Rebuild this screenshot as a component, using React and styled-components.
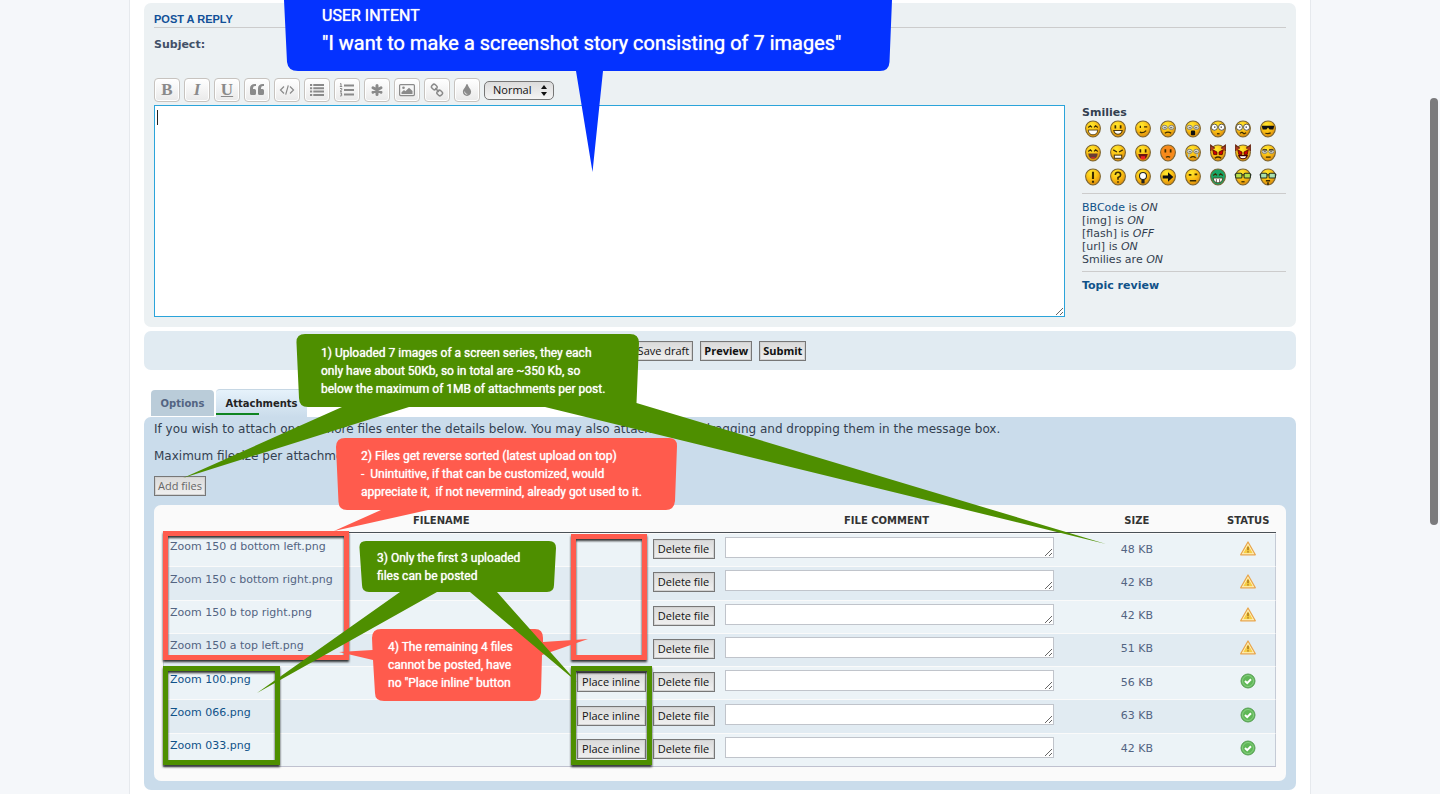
import React from "react";
import styled, { createGlobalStyle, css } from "styled-components";
import { FaTint } from "react-icons/fa";

const verdana = `Verdana, "DejaVu Sans", sans-serif`;
const lucida = `"Lucida Grande", "Open Sans", sans-serif`;
const GREEN = "#4e8f00";
const RED = "#ff5b4d";
const BLUE = "#0432ff";

const GlobalStyle = createGlobalStyle`
  * { box-sizing: border-box; }
  body {
    margin: 0;
    background: #f5f7fa;
    color: #333f50;
    font: 11px/13px ${verdana};
  }
  a { color: #105289; text-decoration: none; }
`;

const Page = styled.div`
  position: relative;
  min-height: 100vh;
  padding: 0 129px;
  overflow: hidden;
`;
const Wrap = styled.main`
  min-height: 100vh;
  padding: 3px 14px 4px;
  background: #fff;
  border: solid #e6e9ed;
  border-width: 0 1px;
`;
const Panel = styled.section`
  padding: 10px;
  border-radius: 7px;
  background: #ecf1f3;
`;
const PanelTitle = styled.h3`
  margin: 0 0 10px;
  padding-bottom: 2px;
  border-bottom: 1px solid #cccccc;
  color: #115098;
  font: bold 11px/12px Arial, "Liberation Sans", sans-serif;
  text-transform: uppercase;
`;
const SubjectRow = styled.div`
  display: flex;
  align-items: flex-start;
  height: 40px;
  color: #425067;
  font-weight: bold;
`;
const SubjectLabel = styled.label`
  width: 22%;
`;
const SubjectInput = styled.input`
  width: 40%;
  height: 20px;
  border: 1px solid #b4bac0;
  border-radius: 4px;
`;
const Toolbar = styled.div`
  display: flex;
  align-items: center;
  gap: 4px;
  margin-bottom: 3px;
`;
const ToolButton = styled.button`
  display: grid;
  place-items: center;
  width: 26px;
  height: 24px;
  padding: 0;
  border: 1px solid #c7c3bf;
  border-radius: 4px;
  background: linear-gradient(#fff, #e9e9e9);
  box-shadow: inset 0 0 0 1px #fff;
  color: #8a8a8a;
  font: bold 17px/20px "Liberation Serif", serif;
  font-style: ${(p) => (p.$italic ? "italic" : "normal")};
  text-decoration: ${(p) => (p.$underline ? "underline" : "none")};
`;
const SizeBox = styled.div`
  position: relative;
  display: flex;
`;
const SizeSelect = styled.select`
  appearance: none;
  width: 70px;
  height: 19px;
  padding: 0 8px;
  border: 1px solid #767676;
  border-radius: 5px;
  background: linear-gradient(#dcdcdc, #f4f4f4);
  color: #111;
  font: 11px/16px ${lucida};
`;
const SizeArrows = styled.svg`
  position: absolute;
  right: 7px;
  top: 4px;
  pointer-events: none;
`;
const EditorRow = styled.div`
  display: flex;
  gap: 17px;
`;
const MessageBox = styled.div`
  position: relative;
  display: flex;
  flex: 1;
`;
const Message = styled.textarea`
  flex: 1;
  height: 212px;
  padding: 3px;
  border: 1px solid #2ba4da;
  background: #fff;
  font: 12px/16px ${verdana};
  outline: none;
`;
const Caret = styled.span`
  position: absolute;
  left: 3px;
  top: 5px;
  width: 1px;
  height: 15px;
  background: #222;
`;
const SideBox = styled.aside`
  width: 204px;
  padding-top: 1px;
`;
const SideTitle = styled.strong`
  display: block;
`;
const Smilies = styled.div`
  display: grid;
  grid-template-columns: repeat(8, 21px);
  grid-auto-rows: 20px;
  gap: 4px;
  align-items: center;
  justify-items: center;
  margin-bottom: 6px;
`;
const SmileyLink = styled.a`
  display: block;
  height: 18px;
`;
const Rule = styled.hr`
  margin: 5px 0 7px;
  border: 0;
  border-top: 1px solid #ccc;
`;
const ActionBar = styled.section`
  display: flex;
  justify-content: center;
  align-items: center;
  gap: 7px;
  height: 39px;
  margin: 4px 0 19px;
  border-radius: 7px;
  background: #e1ebf2;
`;
const PushButton = styled.button`
  height: 20px;
  padding: 0 3px;
  border: 1px solid #777;
  background: linear-gradient(#dadada, #f0f0f0);
  box-shadow: inset 0 0 0 1px #d2d2d2;
  color: #111;
  font: 11px/16px ${lucida};
  white-space: nowrap;
  ${(p) => p.$strong && css`font-weight: bold;`}
  ${(p) => p.$muted && css`color: #666;`}
  ${(p) => p.$wide && css`width: ${p.$wide}px;`}
`;
const Tabs = styled.nav`
  display: flex;
  align-items: flex-end;
  gap: 2px;
  padding-left: 7px;
`;
const Tab = styled.a`
  position: relative;
  height: 26px;
  width: 63px;
  margin-bottom: 1px;
  border-radius: 4px 4px 0 0;
  background: #baccd9;
  color: #536482;
  font-size: 10px;
  font-weight: bold;
  line-height: 27px;
  text-align: center;
  ${(p) =>
    p.$active &&
    css`
      height: 28px;
      width: 91px;
      margin-bottom: 0;
      border-top: 1px solid #c6d7e4;
      background: linear-gradient(#e6f2fb, #cadceb);
      color: #222;
      &::after {
        content: "";
        position: absolute;
        left: 0;
        bottom: 2px;
        width: 43px;
        height: 2px;
        background: #0f8420;
      }
    `}
`;
const AttachPanel = styled(Panel)`
  background: #cadceb;
  padding: 5px 10px 9px;
`;
const Intro = styled.p`
  margin: 0 0 12px;
  font-size: 12px;
  line-height: 15px;
`;
const FileBox = styled.div`
  margin-top: 9px;
  padding: 7px 10px 14px 9px;
  border-radius: 7px;
  background: #fafafa;
`;
const FileTable = styled.table`
  width: 100%;
  height: 255px;
  table-layout: fixed;
  border-collapse: separate;
  border-spacing: 0;
  border-bottom: 1px solid #bfc1cf;
`;
const Head = styled.th`
  width: ${(p) => p.$w};
  height: 21px;
  padding: 0 0 3px;
  border-bottom: 1px solid #4a5056;
  color: #333;
  font-size: 10px;
  font-weight: bold;
  text-transform: uppercase;
`;
const Row = styled.tr`
  background: #ecf3f7;
  &:nth-child(even) { background: #e1ebf2; }
`;
const Cell = styled.td`
  padding: 0 0 2px;
  border-top: 1px solid #fafafa;
  color: #536482;
  text-align: center;
  &:last-child { border-right: 1px solid #c5cbd6; }
  &:first-child { border-left: 1px solid #c5cbd6; }
`;
const FileLine = styled.div`
  display: flex;
  align-items: center;
  gap: 7px;
  padding: 0 5px 0 6px;
`;
const FileName = styled.span`
  flex: 1;
  height: 19px;
  text-align: left;
  color: #536482;
`;
const Comment = styled.textarea`
  display: block;
  width: calc(100% - 4px);
  height: 21px;
  margin: 0 0 3px 5px;
  border: 1px solid #c0c4cb;
  background: #fff;
  font: 11px/13px ${verdana};
  resize: both;
`;
const StatusIcon = styled.svg`
  display: block;
  margin: 0 auto 2px;
`;
const ScrollThumb = styled.div`
  position: absolute;
  right: 2px;
  top: 98px;
  width: 8px;
  height: 427px;
  border-radius: 4px;
  background: #7b7b7d;
`;

/* Annotations lie over the page on a free canvas. */
const Canvas = styled.div`
  position: absolute;
  inset: 0;
  pointer-events: none;
`;
const Shapes = styled.svg`
  position: absolute;
  left: 0;
  top: 0;
  filter: ${(p) => (p.$shadow ? "drop-shadow(0 2px 1px rgba(0,0,0,.8))" : "none")};
`;
const Note = styled.p`
  position: absolute;
  left: ${(p) => p.$x}px;
  top: ${(p) => p.$y}px;
  margin: 0;
  color: #fff;
  font: 400 12px/18px Roboto, sans-serif;
  text-shadow: 0 0 1px #fff;
  white-space: pre;
`;
const IntentNote = styled(Note)`
  font-size: 16px;
  line-height: 20px;
`;
const IntentTitle = styled.strong`
  display: block;
  margin-top: 5px;
  font-size: 20px;
  line-height: 24px;
  font-weight: 400;
`;

const glyph = { width: 16, height: 14, viewBox: "0 0 16 14", fill: "none", stroke: "currentColor" };
const QuoteGlyph = () => (
  <svg {...glyph} fill="currentColor" stroke="none">
    <path d="M7 1v2H6Q4 3 4 5.300v.7h1.500Q7 6 7 7.500v3Q7 12 5.500 12h-3Q1 12 1 10.500V5.500Q1 1 6 1z" />
    <path d="M15 1v2h-1q-2 0-2 2.300v.7h1.500Q15 6 15 7.500v3q0 1.500-1.500 1.500h-3Q9 12 9 10.500V5.500Q9 1 14 1z" />
  </svg>
);
const CodeGlyph = () => (
  <svg {...glyph} strokeWidth="1.200"><path d="M5 3.500L1.500 7L5 10.500M11 3.500L14.500 7L11 10.500M9.300 2.300L6.700 11.700" /></svg>
);
const BulletGlyph = () => (
  <svg {...glyph} strokeWidth="2"><path d="M1 2h2.200M1 5.300h2.200M1 8.600h2.200M1 12h2.200M4.300 2H15M4.300 5.300H15M4.300 8.600H15M4.300 12H15" /></svg>
);
const NumberGlyph = () => (
  <svg {...glyph} strokeWidth="2">
    <path d="M5 2.500H15M5 7H15M5 11.500H15" />
    <path strokeWidth="1" d="M1 1l1-.5v3M.8 3.500h2.400M1 5.500h1.800v1.300L1 8.300h2M1 10h1.900L2 11.300l1 .5q0 1.500-2 1.200" />
  </svg>
);
const AsteriskGlyph = () => (
  <svg {...glyph} strokeWidth="3" strokeLinecap="round"><path d="M8 2.500v9M4 4.800l8 4.400M12 4.800L4 9.200" /></svg>
);
const ImageGlyph = () => (
  <svg {...glyph}>
    <rect x=".6" y="1.600" width="14.800" height="11" rx="1" strokeWidth="1.200" />
    <circle cx="4.500" cy="4.800" r="1.300" fill="currentColor" stroke="none" />
    <path d="M2.500 11V9.300L5 7l1.400 1.300L10 4.700l3.500 3.400V11z" fill="currentColor" stroke="none" />
  </svg>
);
const LinkGlyph = () => (
  <svg {...glyph} strokeWidth="1.500">
    <rect x="2.600" y="1.600" width="5.400" height="4.800" rx="2" transform="rotate(42 5.300 4)" />
    <rect x="8" y="7.600" width="5.400" height="4.800" rx="2" transform="rotate(42 10.700 10)" />
    <path d="M6.300 5l3.500 4" />
  </svg>
);

const tools = [
  ["Bold", "B"],
  ["Italic", "I", { $italic: true }],
  ["Underline", "U", { $underline: true }],
  ["Quote", <QuoteGlyph />],
  ["Code", <CodeGlyph />],
  ["List", <BulletGlyph />],
  ["Ordered list", <NumberGlyph />],
  ["List item", <AsteriskGlyph />],
  ["Insert image", <ImageGlyph />],
  ["Insert URL", <LinkGlyph />],
  ["Font colour", <FaTint size={12} />],
];

const line = { stroke: "#3b2b00", strokeWidth: 1.2, fill: "none" };
const eyes = <path d="M5.500 4.500v3M10.500 4.500v3" {...line} strokeWidth="1.600" />;
const roundEyes = (
  <g fill="#fff" stroke="#444" strokeWidth=".8"><circle cx="4.600" cy="6.300" r="2.900" /><circle cx="11.400" cy="6.300" r="2.900" /><path d="M5 5.500v1.500M11 5.500v1.500" stroke="#000" /></g>
);
const paleEyes = (
  <g fill="#dcdccc" stroke="#777" strokeWidth=".8"><ellipse cx="4.800" cy="6.500" rx="2.500" ry="2" /><ellipse cx="11.200" cy="6.500" rx="2.500" ry="2" /><path d="M4 6.800h2M10 6.800h2" stroke="#444" /></g>
);
const closedEyes = <path d="M3.500 6.500L5.500 5l1.500 1.500M9 6.500L10.500 5l2 1.500" {...line} />;
const teeth = <path d="M3.500 9h9q-.5 4.500-4.500 4.500T3.500 9z" fill="#fff" stroke="#4b3a10" strokeWidth=".8" />;
const redEyes = <path d="M3 5L7 7v2.500H4zM13 5L9 7v2.500h3z" fill="#d00000" stroke="#400" strokeWidth=".7" />;
const horns = <path d="M1 6V.5l4 3M15 6V.5l-4 3" fill="#b03a20" stroke="#6d2d18" strokeWidth="1" />;
const specs = (c) => (
  <g><path d="M0 6h16" stroke="#222" /><rect x="1" y="4.500" width="6" height="4.500" rx="1" fill={c} stroke="#243020" /><rect x="9" y="4.500" width="6" height="4.500" rx="1" fill={c} stroke="#243020" /></g>
);

const smilies = [
  ["Very happy", <>{closedEyes}{teeth}</>],
  ["Smile", <>{eyes}<path d="M4 9.500h8q-1 3.500-4 3.500t-4-3.500z" fill="#fff" stroke="#4b3a10" /></>],
  ["Wink", <><path d="M5.500 5v2M9 6h3M5 11q3 1.500 6-1.500" {...line} /></>],
  ["Sad", <>{paleEyes}<path d="M5 12q3-2 6 0" {...line} /></>],
  ["Surprised", <>{paleEyes}<rect x="6" y="9.500" width="4" height="4.500" rx="1" fill="#111" /></>],
  ["Shocked", <>{roundEyes}<path d="M7 12.500h2.500" {...line} /></>],
  ["Confused", <>{roundEyes}<path d="M5 12l2-1 2 1.500 2-1" {...line} /></>],
  ["Cool", <><path d="M2 5h12l-1 3.500H9.500L8 6.500l-1.500 2H3z" fill="#111" /><path d="M5.500 12q3 1 5-.5" {...line} /></>],
  ["Laughing", <>{closedEyes}<path d="M3.500 8.500h9q-.5 5-4.500 5t-4.500-5z" fill="#693d35" /><path d="M6 12h4l-1 1H7z" fill="#e22" /></>],
  ["Mad", <><path d="M3.500 5L7 7M12.500 5L9 7" {...line} /><rect x="4.500" y="10" width="7" height="3" fill="#fff" stroke="#4b3a10" /></>],
  ["Razz", <>{eyes}<path d="M3.500 9h9q-1 5-4.500 5T3.500 9z" fill="#6d1710" /><path d="M6 11h4v3H6z" fill="#e22" /></>],
  ["Embarrassed", <>{eyes}<path d="M6 12q2-1 4 0" {...line} /></>, "#f78a1b"],
  ["Crying", <>{paleEyes}<path d="M4 9v3M12 9v3" stroke="#a9c4c9" strokeWidth="1.500" /><path d="M5.500 12.500q2.500-2 5 0" {...line} /></>],
  ["Evil", <>{redEyes}<path d="M5 13q3-2.500 6 0" {...line} /></>, null, true],
  ["Twisted", <>{redEyes}<path d="M4 10.500h8q-1 3-4 3t-4-3z" fill="#fff" stroke="#400" /></>, null, true],
  ["Rolling eyes", <>{paleEyes}<path d="M3 5h4M9 5h4M6 12h4.500" {...line} /></>],
  ["Exclamation", <path d="M8 3v7M8 11.500v2" {...line} strokeWidth="2" />],
  ["Question", <path d="M5.500 6q0-2.500 2.500-2.500T10.500 6Q10.500 7.500 8 8.500v2M8 12v1.500" {...line} strokeWidth="1.500" />],
  ["Idea", <g><circle cx="8" cy="7" r="3.300" fill="#fff" stroke="#222" /><path d="M6.500 10.500h3v3.500h-3z" fill="#222" /></g>],
  ["Arrow", <path d="M3 6.500h5v-3L13 8l-5 4.500v-3H3z" fill="#111" />],
  ["Neutral", <><path d="M4 6h2.500M9.500 5.500H12M5 11.500h6" {...line} strokeWidth="1.500" /></>],
  ["Mr. Green", <>{closedEyes}{teeth}<path d="M6.500 10v3M9.500 10v3" stroke="#333" strokeWidth=".7" /></>, "#18a566"],
  ["Geek", <>{specs("#b7e04a")}<path d="M6.500 12.500h3" {...line} /></>],
  ["Uber geek", <>{specs("#a8dfae")}<path d="M6 11.500h4M8 13v2.500" {...line} strokeWidth="1.500" /></>],
];

function Smiley({ name, face, color, horned }) {
  return (
    <SmileyLink href="#smilies" aria-label={name}>
      <svg width="18" height="18" viewBox="-0.5 -0.5 17 17">
        <defs>
          <radialGradient id="skin" cx=".4" cy=".25" r=".8">
            <stop offset="0" stopColor="#ffe92e" /><stop offset=".5" stopColor="#fbc013" /><stop offset="1" stopColor="#d6830d" />
          </radialGradient>
        </defs>
        <path d="M8 .5C12 .5 15 3.300 15 7.200C15 11.500 11.500 15.600 8 15.600S1 11.500 1 7.200C1 3.300 4 .5 8 .5z" fill={color || "url(#skin)"} stroke="#7a6534" strokeWidth="1" />
        {horned && horns}
        {face}
      </svg>
    </SmileyLink>
  );
}

const WarningIcon = () => (
  <StatusIcon width="16" height="15" viewBox="0 0 16 15" role="img" aria-label="Error">
    <path d="M8 1L15.300 13.800H.7z" fill="#fff3c4" stroke="#e9a64c" strokeWidth="1.300" strokeLinejoin="round" />
    <path d="M8 4l4.800 8.200H3.200z" fill="#f6cd45" />
    <path d="M8 5.800v3.400M8 10.200v1.400" stroke="#a9741c" strokeWidth="1.500" />
  </StatusIcon>
);
const DoneIcon = () => (
  <StatusIcon width="16" height="16" viewBox="0 0 16 16" role="img" aria-label="Uploaded">
    <circle cx="8" cy="8" r="7" fill="#5fb757" stroke="#58a055" />
    <circle cx="8" cy="8" r="5.500" fill="none" stroke="#92d68c" strokeWidth=".8" />
    <path d="M5 8l2.200 2.200L11 6.300" fill="none" stroke="#fff" strokeWidth="2" />
  </StatusIcon>
);

const files = [
  ["Zoom 150 d bottom left.png", "48 KB", false],
  ["Zoom 150 c bottom right.png", "42 KB", false],
  ["Zoom 150 b top right.png", "42 KB", false],
  ["Zoom 150 a top left.png", "51 KB", false],
  ["Zoom 100.png", "56 KB", true],
  ["Zoom 066.png", "63 KB", true],
  ["Zoom 033.png", "42 KB", true],
];

function FileRow({ name, size, done }) {
  return (
    <Row>
      <Cell>
        <FileLine>
          <FileName>{done ? <a href="#file">{name}</a> : name}</FileName>
          {done && <PushButton type="button" $wide={69}>Place inline</PushButton>}
          <PushButton type="button" $wide={62}>Delete file</PushButton>
        </FileLine>
      </Cell>
      <Cell><Comment aria-label={`Comment for ${name}`} /></Cell>
      <Cell>{size}</Cell>
      <Cell>{done ? <DoneIcon /> : <WarningIcon />}</Cell>
    </Row>
  );
}

function Annotations() {
  return (
    <Canvas>
      <Shapes width="1440" height="794" $shadow fill="none" strokeWidth="5">
        <rect x="165.500" y="533.500" width="181" height="124" stroke={RED} />
        <rect x="573.500" y="536.500" width="71" height="121" stroke={RED} />
        <rect x="165.500" y="668.500" width="112" height="94" stroke={GREEN} />
        <rect x="573.500" y="668.500" width="76" height="94" stroke={GREEN} />
      </Shapes>
      <Shapes width="1440" height="794">
        <path fill={BLUE} d="M284 0H892L889.500 62Q889 71 880 71H603L592.500 172L576 71H298Q288 71 287 62Z" />
        <path fill={GREEN} d="M305 334H630Q639 334 639 343L636.500 403L1106 544L545 407H409L183 478L342 407H308Q299 407 299 398L296.500 343Q296 334 305 334Z" />
        <path fill={RED} d="M345 438H669Q677 438 677 446L675 501Q674 510 666 510H428L334 531L381 510H347Q339 510 338.500 502L336 447Q336 438 345 438Z" />
        <path fill={RED} d="M381 629H535Q543 629 543 638V642L588 639L542 655L541 693Q540 701 532 701H384Q375 701 375 693L373 660L339 652L372.500 650L372 638Q372 629 381 629Z" />
        <path fill={GREEN} d="M366 541H549Q556 541 556 548L554 585Q554 592 547 592H497L577 682L470 592H437L257 693L400 592H369Q362 592 362 585L359.500 548Q359 541 366 541Z" />
      </Shapes>
      <IntentNote as="div" $x={322} $y={6}>
        USER INTENT
        <IntentTitle>"I want to make a screenshot story consisting of 7 images"</IntentTitle>
      </IntentNote>
      <Note $x={321} $y={344}>{"1) Uploaded 7 images of a screen series, they each\nonly have about 50Kb, so in total are ~350 Kb, so\nbelow the maximum of 1MB of attachments per post."}</Note>
      <Note $x={361} $y={447}>{"2) Files get reverse sorted (latest upload on top)\n-  Unintuitive, if that can be customized, would\nappreciate it,  if not nevermind, already got used to it."}</Note>
      <Note $x={377} $y={549}>{"3) Only the first 3 uploaded\nfiles can be posted"}</Note>
      <Note $x={388} $y={638}>{'4) The remaining 4 files\ncannot be posted, have\nno "Place inline" button'}</Note>
    </Canvas>
  );
}

export default function App() {
  return (
    <Page>
      <GlobalStyle />
      <Wrap>
        <Panel>
          <PanelTitle>Post a reply</PanelTitle>
          <SubjectRow>
            <SubjectLabel htmlFor="subject">Subject:</SubjectLabel>
            <SubjectInput id="subject" type="text" />
          </SubjectRow>
          <Toolbar>
            {tools.map(([name, icon, style]) => (
              <ToolButton key={name} type="button" aria-label={name} {...style}>{icon}</ToolButton>
            ))}
            <SizeBox>
              <SizeSelect aria-label="Font size" defaultValue="Normal"><option>Normal</option></SizeSelect>
              <SizeArrows width="6" height="11" viewBox="0 0 6 11"><path d="M3 0l3 4H0zM3 11l3-4H0z" fill="#111" /></SizeArrows>
            </SizeBox>
          </Toolbar>
          <EditorRow>
            <MessageBox>
              <Message aria-label="Message" />
              <Caret />
            </MessageBox>
            <SideBox>
              <SideTitle>Smilies</SideTitle>
              <Smilies>
                {smilies.map(([name, face, color, horned]) => (
                  <Smiley key={name} name={name} face={face} color={color} horned={horned} />
                ))}
              </Smilies>
              <Rule />
              <div><a href="#bbcode">BBCode</a> is <em>ON</em></div>
              <div>[img] is <em>ON</em></div>
              <div>[flash] is <em>OFF</em></div>
              <div>[url] is <em>ON</em></div>
              <div>Smilies are <em>ON</em></div>
              <Rule />
              <a href="#review"><strong>Topic review</strong></a>
            </SideBox>
          </EditorRow>
        </Panel>
        <ActionBar>
          <PushButton type="button">Save draft</PushButton>
          <PushButton type="button" $strong>Preview</PushButton>
          <PushButton type="submit" $strong>Submit</PushButton>
        </ActionBar>
        <Tabs>
          <Tab href="#options">Options</Tab>
          <Tab href="#attachments" $active>Attachments</Tab>
        </Tabs>
        <AttachPanel>
          <Intro>If you wish to attach one or more files enter the details below. You may also attach files by dragging and dropping them in the message box.</Intro>
          <Intro>Maximum filesize per attachment: 1 MB.</Intro>
          <PushButton type="button" $muted>Add files</PushButton>
          <FileBox>
            <FileTable>
              <thead>
                <tr>
                  <Head $w="50%">Filename</Head>
                  <Head $w="30%">File comment</Head>
                  <Head $w="15%">Size</Head>
                  <Head $w="5%">Status</Head>
                </tr>
              </thead>
              <tbody>
                {files.map(([name, size, done]) => <FileRow key={name} name={name} size={size} done={done} />)}
              </tbody>
            </FileTable>
          </FileBox>
        </AttachPanel>
      </Wrap>
      <Annotations />
      <ScrollThumb />
    </Page>
  );
}
